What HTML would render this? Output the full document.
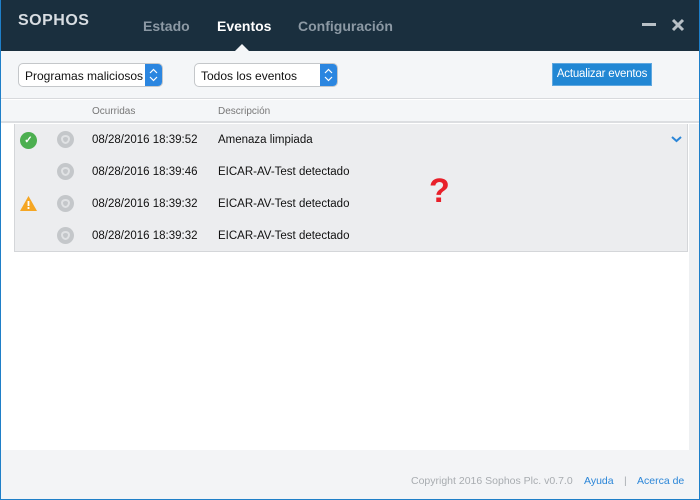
<!DOCTYPE html>
<html><head><style>
*{margin:0;padding:0;box-sizing:border-box}
body{width:700px;height:500px;overflow:hidden;font-family:"Liberation Sans",sans-serif;background:#fff;position:relative}
.win{position:absolute;left:0;top:0;width:700px;height:500px;border:1px solid #1f7fc8;border-top:none;overflow:hidden}
.hdr{position:absolute;left:0;top:0;width:700px;height:51px;background:#1a2f3e}
.logo{position:absolute;left:17px;top:12px;color:#d8dde2;font-weight:bold;font-size:16px;letter-spacing:0.5px}
.tab{position:absolute;top:18px;font-size:14px;font-weight:bold;color:#8c99a4}
.tb{position:absolute;left:0;top:51px;width:700px;height:48px;background:#f4f6f8;border-bottom:1px solid #d8dadd}
.sel{position:absolute;top:63px;height:24px;border:1px solid #c4c7ca;border-radius:5px;background:#fff;font-size:12px;color:#111;padding:5px 0 0 6px;overflow:hidden;white-space:nowrap}
.sel .ar{position:absolute;right:0;top:0;width:17px;height:22px;background:#2b86e0}
.btn{position:absolute;left:551px;top:63px;width:100px;height:23px;background:#2187d4;border:1px solid #5fa8e0;color:#fff;font-size:11.5px;padding-top:4px;text-align:center;white-space:nowrap;letter-spacing:-0.2px}
.colh{position:absolute;left:0;top:100px;width:700px;height:23px;background:#f4f6f8;font-size:10px;color:#777;border-bottom:2px solid #dcdee1}
.tbl{position:absolute;left:13px;top:124px;width:674px;height:128px;background:#ecedef;border:1px solid #d4d6d9;border-top:none}
.row{position:absolute;left:0;height:32px;width:672px;font-size:11.5px;color:#111}
.row span{position:absolute;top:10px}
.sh{position:absolute;left:42px;top:7px;width:17px;height:17px;border-radius:50%;background:#c4c7ca}
.sh:after{content:"";position:absolute;left:4px;top:4px;width:9px;height:9px;border-radius:50% 50% 50% 50%/40% 40% 60% 60%;border:2px solid #e0e2e4;box-sizing:border-box}
.scroll{position:absolute;left:688px;top:124px;width:11px;height:326px;background:#eef0f2}
.ftr{position:absolute;left:0;top:450px;width:700px;height:50px;background:#f3f4f6;font-size:10.5px}
</style></head><body><div class="win">
<div class="hdr">
<div class="logo">SOPHOS</div>
<div class="tab" style="left:142px">Estado</div>
<div class="tab" style="left:216px;color:#fff">Eventos</div>
<div class="tab" style="left:297px">Configuración</div>
<div style="position:absolute;left:234px;top:44px;width:0;height:0;border-left:7px solid transparent;border-right:7px solid transparent;border-bottom:7px solid #f4f6f8"></div>
<div style="position:absolute;left:641px;top:23px;width:14px;height:3px;background:#b8c0c6"></div>
<svg style="position:absolute;left:670px;top:18px" width="14" height="14"><path d="M2 2L12 12M12 2L2 12" stroke="#b8c0c6" stroke-width="3"/></svg>
</div>
<div class="tb"></div>
<div class="sel" style="left:17px;width:145px">Programas maliciosos y …<div class="ar"><svg width="17" height="22"><path d="M5 9L8.5 5.5L12 9M5 13L8.5 16.5L12 13" stroke="#fff" stroke-width="1.2" fill="none"/></svg></div></div>
<div class="sel" style="left:193px;width:144px">Todos los eventos<div class="ar"><svg width="17" height="22"><path d="M5 9L8.5 5.5L12 9M5 13L8.5 16.5L12 13" stroke="#fff" stroke-width="1.2" fill="none"/></svg></div></div>
<div class="btn">Actualizar eventos</div>
<div class="colh"><span style="position:absolute;left:91px;top:6px">Ocurridas</span><span style="position:absolute;left:217px;top:6px">Descripción</span></div>
<div class="tbl">
<div class="row" style="top:0"><div style="position:absolute;left:5px;top:8px;width:17px;height:17px;border-radius:50%;background:#4caf50;color:#fff;font-size:10px;text-align:center;line-height:17px;font-weight:bold">✓</div><div class="sh"></div><span style="left:77px">08/28/2016 18:39:52</span><span style="left:203px">Amenaza limpiada</span>
<svg style="position:absolute;left:656px;top:12px" width="11" height="7"><path d="M1 1L5.5 5L10 1" stroke="#2b86d8" stroke-width="2" fill="none"/></svg></div>
<div class="row" style="top:32px"><div class="sh"></div><span style="left:77px">08/28/2016 18:39:46</span><span style="left:203px">EICAR-AV-Test detectado</span></div>
<div class="row" style="top:64px"><svg style="position:absolute;left:5px;top:8px" width="17" height="15"><path d="M8.5 0L17 15H0Z" fill="#f5a623"/><rect x="7.6" y="5" width="1.8" height="5" fill="#fff"/><rect x="7.6" y="11" width="1.8" height="2" fill="#fff"/></svg><div class="sh"></div><span style="left:77px">08/28/2016 18:39:32</span><span style="left:203px">EICAR-AV-Test detectado</span>
<div style="position:absolute;left:414px;top:-16px;color:#e8202a;font-size:34px;font-weight:bold">?</div></div>
<div class="row" style="top:96px"><div class="sh"></div><span style="left:77px">08/28/2016 18:39:32</span><span style="left:203px">EICAR-AV-Test detectado</span></div>
</div>
<div class="scroll"></div>
<div class="ftr"><span style="position:absolute;left:410px;top:25px;color:#a8acb0">Copyright 2016 Sophos Plc. v0.7.0</span><span style="position:absolute;left:583px;top:25px;color:#2b86d8">Ayuda</span><span style="position:absolute;left:623px;top:25px;color:#a8acb0">|</span><span style="position:absolute;left:636px;top:25px;color:#2b86d8">Acerca de</span></div>
</div></body></html>
